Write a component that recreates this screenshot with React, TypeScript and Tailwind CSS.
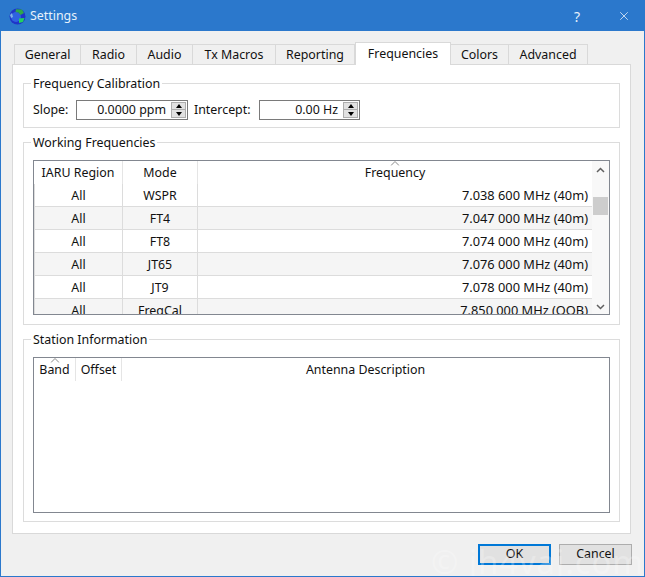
import React from "react";
import { X } from "lucide-react";

const tabs = ["General", "Radio", "Audio", "Tx Macros", "Reporting", "Frequencies", "Colors", "Advanced"];
const tabWidths = ["w-[67px]", "w-[56px]", "w-[56px]", "w-[83px]", "w-[79px]", "w-[96px]", "w-[58px]", "w-[79px]"];

const rows = [
  { mode: "WSPR", freq: "7.038 600 MHz (40m)" },
  { mode: "FT4", freq: "7.047 000 MHz (40m)" },
  { mode: "FT8", freq: "7.074 000 MHz (40m)" },
  { mode: "JT65", freq: "7.076 000 MHz (40m)" },
  { mode: "JT9", freq: "7.078 000 MHz (40m)" },
  { mode: "FreqCal", freq: "7.850 000 MHz (OOB)" },
];

function Globe() {
  return (
    <svg width="17" height="17" viewBox="0 0 17 17" className="shrink-0">
      <circle cx="8.5" cy="8.5" r="8" fill="#1f35c8" />
      <circle cx="7" cy="9" r="5" fill="#2f62e0" />
      <path d="M7 1.2 L13 1.5 L15 5 L11.5 7 L9.5 4.5 L6.5 4 Z" fill="#2fa84a" />
      <path d="M10 10.5 L15.5 10 L14 14 L10 15 Z" fill="#22d060" />
      <path d="M1 7 L3 5 L4 9 L2 10 Z" fill="#7fb0e8" />
    </svg>
  );
}

function GroupBox({ title, className, children }: { title: string; className: string; children: React.ReactNode }) {
  return (
    <fieldset className={`border border-[#dcdcdc] mx-[10px] px-[9px] ${className}`}>
      <legend className="-ml-[2px] px-[2px] leading-[17px] text-[12.4px] text-[#111]">{title}</legend>
      {children}
    </fieldset>
  );
}

function SpinBox({ value, className }: { value: string; className: string }) {
  return (
    <div className={`h-[20px] border border-[#7a7a7a] bg-white flex items-center justify-end pr-[1px] ${className}`}>
      <span className="mr-[5px] leading-[18px]">{value}</span>
      <div className="flex flex-col w-[15px] h-[16px] gap-0">
        <div className="h-[8px] bg-[#e1e1e1] border border-[#adadad] flex items-center justify-center">
          <div className="w-0 h-0 border-x-[3.5px] border-x-transparent border-b-[4px] border-b-black" />
        </div>
        <div className="h-[8px] bg-[#e1e1e1] border border-[#adadad] border-t-0 flex items-center justify-center">
          <div className="w-0 h-0 border-x-[3.5px] border-x-transparent border-t-[4px] border-t-black" />
        </div>
      </div>
    </div>
  );
}

function SortArrow() {
  return (
    <svg width="9" height="5" viewBox="0 0 9 5" className="absolute top-[0px] left-1/2 -translate-x-1/2">
      <path d="M0.5 4.5 L4.5 0.5 L8.5 4.5" fill="none" stroke="#8a8a8a" strokeWidth="1" />
    </svg>
  );
}

export default function App() {
  return (
    <div
      className="w-[645px] h-[577px] bg-[#f0f0f0] border border-[#2b78cc] relative overflow-hidden text-[12.4px] text-[#111] flex flex-col"
      style={{ fontFamily: '"Noto Sans", sans-serif' }}
    >
      <div className="h-[30px] bg-[#2b78cc] flex items-center shrink-0 text-white">
        <div className="ml-[8px] mr-[4px] flex">
          <Globe />
        </div>
        <span className="text-[12.4px] text-[#e8f1fb]">Settings</span>
        <span className="ml-auto mr-[37px] text-[14px] text-[#e8f1fb]">?</span>
        <X size={14} strokeWidth={1.2} className="mr-[13px] text-white" />
      </div>

      <div className="flex-1 pt-[10px] px-[11px] flex flex-col">
        <div className="flex items-end h-[23px] pl-[2px] relative z-10">
          {tabs.map((tab, i) =>
            tab === "Frequencies" ? (
              <div key={tab} className={`${tabWidths[i]} h-[23px] bg-white border border-b-0 border-[#d9d9d9] flex items-center justify-center -mb-[1px]`}>
                {tab}
              </div>
            ) : (
              <div key={tab} className={`${tabWidths[i]} h-[20px] pt-[1px] bg-[#f0f0f0] border border-l-0 first:border-l border-b-0 border-[#d9d9d9] flex items-center justify-center`}>
                {tab}
              </div>
            )
          )}
        </div>

        <div className="w-[619px] h-[470px] bg-white border border-[#d9d9d9] pt-[10px]">
          <GroupBox title="Frequency Calibration" className="h-[53px]">
            <div className="flex items-center mt-[8px]">
              <span className="w-[43px]">Slope:</span>
              <SpinBox value="0.0000 ppm" className="w-[112px]" />
              <span className="ml-[6px] w-[65px]">Intercept:</span>
              <SpinBox value="0.00 Hz" className="w-[101px]" />
            </div>
          </GroupBox>

          <GroupBox title="Working Frequencies" className="h-[191px] mt-[6px]">
            <div className="h-[155px] border border-[#828790] mt-[9px] flex overflow-hidden">
              <div className="flex-1 min-w-0">
                <div className="flex h-[23px]">
                  <div className="w-[89px] pt-[2px] border-r border-[#e5e5e5] flex items-center justify-center">IARU Region</div>
                  <div className="w-[75px] pt-[2px] border-r border-[#e5e5e5] flex items-center justify-center">Mode</div>
                  <div className="flex-1 pt-[2px] relative flex items-center justify-center">
                    <SortArrow />
                    Frequency
                  </div>
                </div>
                {rows.map((row, i) => (
                  <div key={row.mode} className={`flex h-[23px] border-b border-[#dcdcdc] ${i % 2 === 1 ? "bg-[#f5f5f5]" : "bg-white"}`}>
                    <div className="w-[89px] pt-[2px] border-l border-r border-[#dcdcdc] flex items-center justify-center">All</div>
                    <div className="w-[75px] pt-[2px] border-r border-[#dcdcdc] flex items-center justify-center">{row.mode}</div>
                    <div className="flex-1 pt-[2px] flex items-center justify-end pr-[4px] text-[12.8px]">{row.freq}</div>
                  </div>
                ))}
              </div>
              <div className="w-[17px] bg-[#f8f8f8] flex flex-col items-center relative">
                <svg width="9" height="6" viewBox="0 0 9 6" className="mt-[6px]">
                  <path d="M1 5 L4.5 1.5 L8 5" fill="none" stroke="#606060" strokeWidth="1.5" />
                </svg>
                <div className="w-[15px] h-[18px] bg-[#cdcdcd] mt-[24px]" />
                <svg width="9" height="6" viewBox="0 0 9 6" className="mt-auto mb-[4px]">
                  <path d="M1 1 L4.5 4.5 L8 1" fill="none" stroke="#606060" strokeWidth="1.5" />
                </svg>
              </div>
            </div>
          </GroupBox>

          <GroupBox title="Station Information" className="h-[191px] mt-[6px]">
            <div className="h-[156px] border border-[#828790] mt-[9px] bg-white">
              <div className="flex h-[23px]">
                <div className="w-[42px] pt-[2px] border-r border-[#e5e5e5] flex items-center justify-center relative">
                  <SortArrow />
                  Band
                </div>
                <div className="w-[46px] pt-[2px] border-r border-[#e5e5e5] flex items-center justify-center">Offset</div>
                <div className="flex-1 pt-[2px] flex items-center justify-center">Antenna Description</div>
              </div>
            </div>
          </GroupBox>
        </div>

        <div className="flex justify-end gap-[8px] mt-[10px] pr-[1px]">
          <button className="w-[73px] h-[21px] bg-[#e1e1e1] border-2 border-[#0078d7] flex items-center justify-center">OK</button>
          <button className="w-[73px] h-[21px] bg-[#e1e1e1] border border-[#adadad] flex items-center justify-center">Cancel</button>
        </div>
      </div>

      <div className="absolute right-[0px] bottom-[-6px] text-[33px] leading-[40px] text-white/25 tracking-wide pointer-events-none">
        © jh4vaj.com
      </div>
    </div>
  );
}
